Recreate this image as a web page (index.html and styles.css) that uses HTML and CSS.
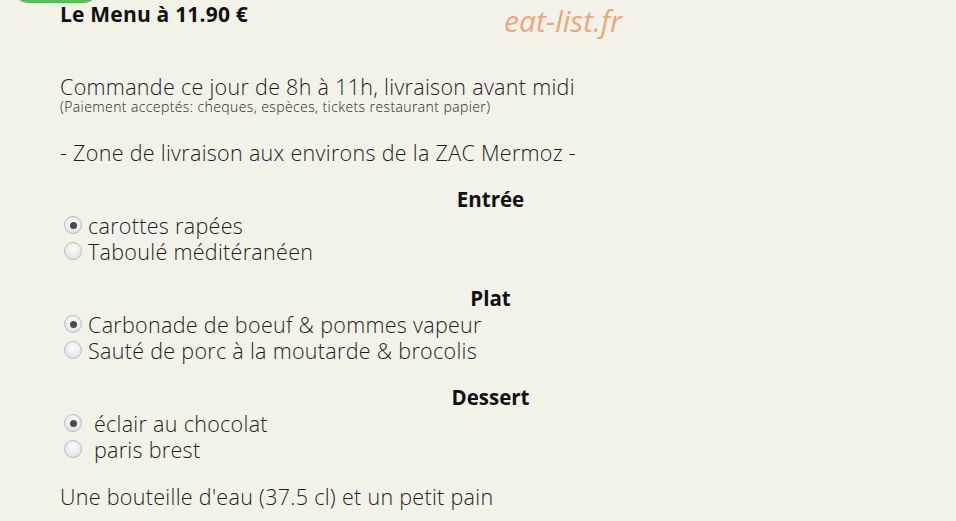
FILE: index.html
```html
<!DOCTYPE html>
<html lang="fr">
<head>
<meta charset="utf-8">
<title>Le Menu à 11.90 €</title>
<link rel="stylesheet" href="styles.css">
</head>
<body>
<div class="tab"></div>
<main class="page">
  <header class="header">
    <h1 class="title">Le Menu à 11.90 €</h1>
    <span class="brand">eat-list.fr</span>
  </header>

  <p class="intro">Commande ce jour de 8h à 11h, livraison avant midi</p>
  <p class="note">(Paiement acceptés: cheques, espèces, tickets restaurant papier)</p>

  <p class="zone">- Zone de livraison aux environs de la ZAC Mermoz -</p>

  <section class="course">
    <h2 class="course-title">Entrée</h2>
    <label class="option"><input type="radio" name="entree" checked>carottes rapées</label>
    <label class="option"><input type="radio" name="entree">Taboulé méditéranéen</label>
  </section>

  <section class="course">
    <h2 class="course-title">Plat</h2>
    <label class="option"><input type="radio" name="plat" checked>Carbonade de boeuf &amp; pommes vapeur</label>
    <label class="option"><input type="radio" name="plat">Sauté de porc à la moutarde &amp; brocolis</label>
  </section>

  <section class="course">
    <h2 class="course-title">Dessert</h2>
    <label class="option"><input type="radio" name="dessert" checked> éclair au chocolat</label>
    <label class="option"><input type="radio" name="dessert"> paris brest</label>
  </section>

  <p class="extra">Une bouteille d'eau (37.5 cl) et un petit pain</p>
</main>
</body>
</html>
```

FILE: styles.css
```css
html, body {
  margin: 0;
  background: #f3f2e8;
}

body {
  font-family: "Open Sans", "Noto Sans", sans-serif;
  font-weight: 300;
  color: #1e1e1e;
}

/* green tab peeking in from the top edge */
.tab {
  position: absolute;
  top: -14px;
  left: 12px;
  width: 88px;
  height: 17px;
  border-radius: 0 0 40px 40px;
  background: linear-gradient(#79c66a, #5cb955);
}

.page {
  width: 861px;
  padding-left: 60px;
}

.header {
  display: flex;
  align-items: flex-start;
  height: 74px;
}

.title {
  margin: 2px 0 0;
  font-size: 21px;
  line-height: 24px;
  font-weight: 700;
  letter-spacing: 0.2px;
  color: #111;
}

.brand {
  margin: 2px 0 0 auto;
  width: 417px;
  font-size: 30px;
  line-height: 38px;
  font-style: italic;
  font-weight: 400;
  color: #f0a67c;
}

.intro,
.zone,
.extra {
  margin: 0;
  font-size: 21.5px;
  line-height: 26px;
  letter-spacing: 0.3px;
}

.note {
  margin: 0;
  font-size: 14px;
  line-height: 14px;
  letter-spacing: 0.4px;
}

.zone {
  margin-top: 26px;
}

.course {
  margin-top: 20px;
}

.course + .course {
  margin-top: 21px;
}

.course-title {
  margin: 0;
  text-align: center;
  font-size: 20.5px;
  line-height: 26px;
  font-weight: 700;
  color: #111;
}

.option {
  display: flex;
  align-items: center;
  height: 26px;
  font-size: 21.5px;
  letter-spacing: 0.3px;
  white-space: pre;
}

.option input {
  appearance: none;
  -webkit-appearance: none;
  width: 18px;
  height: 18px;
  margin: 0 6px 0 4px;
  border: 1px solid #bdbdbd;
  border-radius: 50%;
  background: radial-gradient(circle at 50% 35%, #fdfdfd, #dcdcdc);
  display: grid;
  place-items: center;
}

.option input:checked::before {
  content: "";
  width: 7px;
  height: 7px;
  border-radius: 50%;
  background: #4a4a4a;
}

.extra {
  margin-top: 22px;
}
```
